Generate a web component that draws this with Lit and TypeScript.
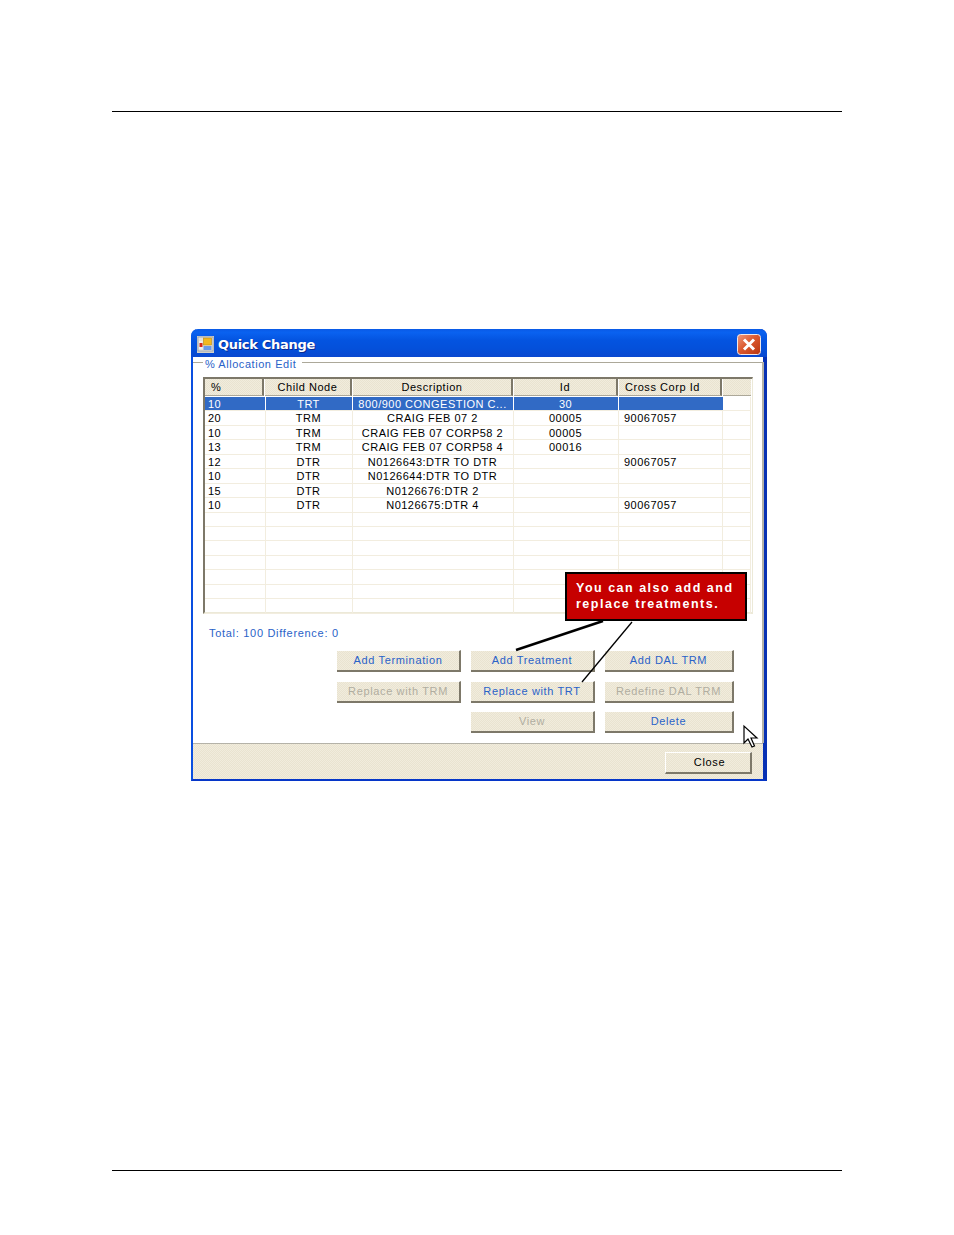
import { LitElement, html, css, svg } from "lit";
import { customElement } from "lit/decorators.js";

const ROWS = [
  ["10", "TRT", "800/900 CONGESTION C...", "30", ""],
  ["20", "TRM", "CRAIG FEB 07 2", "00005", "90067057"],
  ["10", "TRM", "CRAIG FEB 07 CORP58 2", "00005", ""],
  ["13", "TRM", "CRAIG FEB 07 CORP58 4", "00016", ""],
  ["12", "DTR", "N0126643:DTR TO DTR", "", "90067057"],
  ["10", "DTR", "N0126644:DTR TO DTR", "", ""],
  ["15", "DTR", "N0126676:DTR 2", "", ""],
  ["10", "DTR", "N0126675:DTR 4", "", "90067057"],
  ["", "", "", "", ""],
  ["", "", "", "", ""],
  ["", "", "", "", ""],
  ["", "", "", "", ""],
  ["", "", "", "", ""],
  ["", "", "", "", ""],
  ["", "", "", "", ""],
];
const HEADERS = ["%", "Child Node", "Description", "Id", "Cross Corp Id", ""];
const BUTTONS: [string, boolean][] = [
  ["Add Termination", true],
  ["Add Treatment", true],
  ["Add DAL TRM", true],
  ["Replace with TRM", false],
  ["Replace with TRT", true],
  ["Redefine DAL TRM", false],
  ["", false],
  ["View", false],
  ["Delete", true],
];

@customElement("app-root")
export class AppRoot extends LitElement {
  static styles = css`
    :host {
      display: block;
      width: 954px;
      height: 1235px;
      background: #fff;
      font-family: "Liberation Sans", Arial, sans-serif;
      overflow: hidden;
    }
    .page {
      height: 1235px;
      box-sizing: border-box;
      padding: 111px 112px 64px;
      display: flex;
      flex-direction: column;
    }
    .rule {
      height: 1px;
      background: #000;
      flex: none;
    }
    .spacer {
      flex: 1;
    }
    .dialog {
      position: relative;
      flex: none;
      width: 576px;
      height: 452px;
      margin: 217px 0 0 79px;
      box-sizing: border-box;
      background: #fff;
      border-left: 2px solid #0a4fe0;
      border-right: 4px solid #0731b4;
      border-bottom: 2px solid #0636c8;
      display: flex;
      flex-direction: column;
      border-radius: 7px 7px 0 0;
    }
    .title {
      flex: none;
      height: 28px;
      margin: 0 -4px 0 -2px;
      border-radius: 7px 7px 0 0;
      background: linear-gradient(180deg, #0a5ae6 0%, #0a62f0 12%, #0454e0 40%, #0450da 70%, #0a48d0 100%);
      display: flex;
      align-items: center;
      padding: 2px 6px 0 6px;
      box-sizing: border-box;
      gap: 4px;
    }
    .title-text {
      color: #fff;
      font-family: "DejaVu Sans", "Liberation Sans", sans-serif;
      font-weight: 700;
      font-size: 13px;
      letter-spacing: -0.3px;
      text-shadow: 1px 1px 0 #0a2a90;
      flex: 1;
    }
    .close-x {
      display: block;
      width: 24px;
      height: 21px;
    }
    fieldset {
      flex: none;
      height: 389px;
      margin: -3px -1px 0 0;
      padding: 6px 0 0 10px;
      box-sizing: border-box;
      border: none;
      border-top: 1px solid #aca899;
      border-right: 2px solid #b4b2a8;
      position: relative;
    }
    legend {
      margin-left: 0;
      padding: 4px 6px 0 2px;
      font-size: 11px;
      line-height: 13px;
      letter-spacing: 0.55px;
      color: #2a62c8;
    }
    .grid {
      width: 550px;
      height: 237px;
      box-sizing: border-box;
      border-top: 2px solid #7d7869;
      border-left: 2px solid #7d7869;
      border-right: 1px solid #ece9d8;
      border-bottom: 2px solid #ece9d8;
      display: flex;
      flex-direction: column;
    }
    .head,
    .row {
      display: grid;
    }
    .head {
      height: 17px;
      flex: none;
      grid-template-columns: 60px 88px 161px 105px 104px 28px;
    }
    .hcell {
      box-sizing: border-box;
      margin-right: 1px;
      border-right: 2px solid #7d7869;
      border-bottom: 1px solid #aca899;
      background: repeating-conic-gradient(#f1ecdd 0 25%, #e9e3d0 0 50%) 0 0 / 2px 2px;
      font-size: 11px;
      line-height: 16px;
      letter-spacing: 0.55px;
      text-align: center;
      color: #000;
      white-space: nowrap;
    }
    .hcell:last-child {
      border-right: none;
      margin-right: 0;
    }
    .hcell.left {
      text-align: left;
      padding-left: 6px;
    }
    .body {
      padding-top: 1px;
      flex: 1;
      display: flex;
      flex-direction: column;
    }
    .row {
      height: 14.45px;
      flex: none;
      box-sizing: border-box;
      font-size: 11px;
      line-height: 14px;
      letter-spacing: 0.5px;
      color: #000;
      grid-template-columns: 61px 87px 161px 105px 104px 28px;
    }
    .cell {
      box-sizing: border-box;
      padding-right: 1px;
      border-right: 1px solid #f2eddf;
      border-bottom: 1px solid #f2eddf;
      text-align: center;
      white-space: nowrap;
      overflow: hidden;
    }
    .cell.left {
      text-align: left;
      padding-left: 3px;
    }
    .cell.cross {
      padding-left: 5px;
    }
    .row.sel .cell:not(:last-child) {
      background: #316ac5;
      color: #fff;
      border-right: 1px solid #fff;
    }
    .row.sel .cell:nth-child(5) {
      border-right: none;
    }
    .total {
      margin: 12px 0 0 6px;
      font-size: 11px;
      line-height: 14px;
      letter-spacing: 0.7px;
      color: #2a62c8;
    }
    .actions {
      margin: 10px 0 0 134px;
      display: grid;
      grid-template-columns: 124px 124px 129px;
      grid-auto-rows: 22px;
      column-gap: 10px;
      row-gap: 8.5px;
      width: 397px;
    }
    .btn {
      box-sizing: border-box;
      border-right: 2px solid #7d7869;
      border-bottom: 2px solid #7d7869;
      border-top: 1px solid #fff;
      background: repeating-conic-gradient(#f1ecdd 0 25%, #e9e3d0 0 50%) 0 0 / 2px 2px;
      font-size: 11px;
      line-height: 18px;
      letter-spacing: 0.64px;
      text-align: center;
      color: #2a62c8;
      white-space: nowrap;
    }
    .btn.off {
      color: #b0ada0;
    }
    .btn.blank {
      visibility: hidden;
    }
    .footer {
      flex: 1;
      box-sizing: border-box;
      border-top: 1px solid #b4b2a8;
      background: repeating-conic-gradient(#f1ecdd 0 25%, #e9e3d0 0 50%) 0 0 / 2px 2px;
      display: flex;
      justify-content: flex-end;
      padding: 8px 11px 0 0;
    }
    .btn.closebtn {
      width: 87px;
      height: 22px;
      color: #000;
      border-left: 1px solid #fff;
      padding-left: 3px;
    }
    .overlay {
      position: absolute;
      left: -2px;
      top: 0;
      pointer-events: none;
    }
    .callout {
      position: absolute;
      left: 372px;
      top: 243px;
      width: 182px;
      height: 49px;
      box-sizing: border-box;
      border: 2px solid #000;
      background: #c60000;
      color: #fff;
      font-weight: 700;
      font-size: 12.5px;
      line-height: 16px;
      letter-spacing: 1.5px;
      padding: 5.5px 0 0 9px;
      white-space: nowrap;
    }
  `;

  render() {
    return html`<div class="page">
      <div class="rule"></div>
      <div class="dialog">
        <div class="title">
          <svg width="17" height="17" viewBox="0 0 17 17">
            <rect x="0" y="0" width="17" height="17" fill="#d5d2c8"/>
            <rect x="1" y="1" width="15" height="14" fill="#e6e3d8" stroke="#7a8aa8" stroke-width="0.6"/>
            <rect x="2" y="5" width="3.5" height="8" fill="#f0f0f0"/>
            <rect x="2.5" y="7" width="3" height="4" fill="#d82818"/>
            <rect x="6.5" y="2" width="8" height="7" fill="#f2b820" stroke="#b88a10" stroke-width="0.6"/>
            <rect x="6.5" y="10" width="8" height="4" fill="#6a9ae8"/>
          </svg>
          <span class="title-text">Quick Change</span>
          <svg class="close-x" viewBox="0 0 24 21">
            <defs>
              <linearGradient id="cx" x1="0" y1="0" x2="1" y2="1">
                <stop offset="0" stop-color="#ec9a80"/>
                <stop offset="0.45" stop-color="#dc5a30"/>
                <stop offset="1" stop-color="#b8340f"/>
              </linearGradient>
            </defs>
            <rect x="0.5" y="0.5" width="23" height="20" rx="3" fill="url(#cx)" stroke="#f0e8e8"/>
            <path d="M7 5.5 L17 15.5 M17 5.5 L7 15.5" stroke="#fff" stroke-width="3" fill="none"/>
          </svg>
        </div>
        <fieldset>
          <legend>% Allocation Edit</legend>
          <div class="grid">
            <div class="head">
              ${HEADERS.map((h, i) => html`<div class="hcell ${i === 0 || i === 4 ? "left" : ""}">${h}</div>`)}
            </div>
            <div class="body">
              ${ROWS.map(
                (r, ri) => html`<div class="row ${ri === 0 ? "sel" : ""}">
                  ${r.map((c, i) => html`<div class="cell ${i === 0 ? "left" : ""} ${i === 4 ? "left cross" : ""}">${c}</div>`)}
                  <div class="cell"></div>
                </div>`
              )}
            </div>
          </div>
          <div class="total">Total: 100 Difference: 0</div>
          <div class="actions">
            ${BUTTONS.map(
              ([t, on]) => html`<div class="btn ${on ? "" : "off"} ${t ? "" : "blank"}">${t}</div>`
            )}
          </div>
        </fieldset>
        <div class="footer"><div class="btn closebtn">Close</div></div>
        <svg class="overlay" width="576" height="452" viewBox="0 0 576 452">
          ${svg`<path d="M412 292 L325 321" stroke="#000" stroke-width="2.4" fill="none"/>
          <path d="M441 293 L391 353" stroke="#000" stroke-width="1.3" fill="none"/>
          <path d="M553 397 V414 L557 410 L561 418 L563.5 417 L560 409 L566 409 Z" fill="#fff" stroke="#000" stroke-width="1.2"/>`}
        </svg>
        <div class="callout">You can also add and<br />replace treatments.</div>
      </div>
      <div class="spacer"></div>
      <div class="rule"></div>
    </div>`;
  }
}
